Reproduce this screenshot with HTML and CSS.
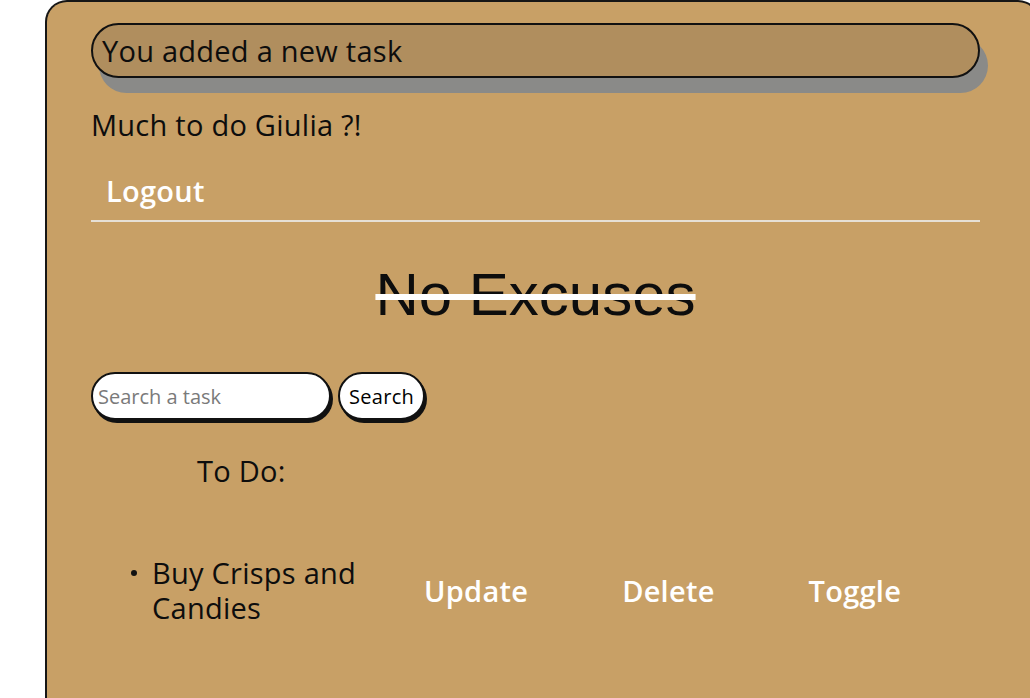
FILE: index.html
```html
<!DOCTYPE html>
<html>
<head>
<meta charset="utf-8">
<link rel="stylesheet" href="styles.css">
</head>
<body>
<div class="card">
  <div class="notice">You added a new task</div>
  <p class="greeting">Much to do Giulia ?!</p>
  <nav class="nav"><a class="logout" href="#">Logout</a></nav>
  <h1 class="title">No Excuses</h1>
  <form class="search">
    <input class="search-input" type="text" placeholder="Search a task">
    <button class="search-btn" type="button">Search</button>
  </form>
  <h2 class="todo-head">To Do:</h2>
  <ul class="tasks">
    <li class="task">
      <span class="task-name">Buy Crisps and Candies</span>
      <a class="action act-update" href="#">Update</a>
      <a class="action act-delete" href="#">Delete</a>
      <a class="action act-toggle" href="#">Toggle</a>
    </li>
  </ul>
</div>
</body>
</html>
```
FILE: styles.css
```css
html, body {
  margin: 0;
  padding: 0;
  background: #ffffff;
  overflow: hidden;
  height: 698px;
}
.card {
  box-sizing: border-box;
  margin-left: 45px;
  width: 995px;
  height: 720px;
  background: #c8a066;
  border: 2px solid #161616;
  border-bottom: none;
  border-radius: 22px 22px 0 0;
  padding: 21px 58px 0 44px;
  font-family: "Open Sans", sans-serif;
  color: #0d0d0d;
  letter-spacing: 0.25px;
}
.notice {
  box-sizing: border-box;
  height: 55px;
  background: #b08e5e;
  border: 2px solid #111;
  border-radius: 28px;
  box-shadow: 8px 15px 0 #8a8a88;
  padding: 0 9px;
  font-size: 29px;
  line-height: 51px;
}
.greeting {
  margin: 30px 0 0;
  font-size: 29px;
  line-height: 34px;
}
.nav {
  margin-top: 32px;
  border-bottom: 2px solid #e6e0d6;
  padding: 0 0 12px 15px;
  height: 34px;
}
.logout {
  color: #ffffff;
  text-decoration: none;
  font-weight: 600;
  font-size: 29px;
  line-height: 34px;
}
.title {
  margin: 40px 0 0;
  text-align: center;
  font-family: "Liberation Sans", Arial, sans-serif;
  font-weight: 400;
  letter-spacing: 0;
  font-size: 60px;
  line-height: 66px;
  text-decoration: line-through;
  text-decoration-color: #ffffff;
  text-decoration-thickness: 6px;
}
.search {
  margin-top: 44px;
  display: flex;
  gap: 7px;
  align-items: center;
}
.search-input {
  box-sizing: border-box;
  width: 240px;
  height: 48px;
  border: 2px solid #111;
  border-radius: 24px;
  background: #fff;
  box-shadow: 2px 3px 0 #111;
  padding: 0 5px;
  font-family: "Open Sans", sans-serif;
  font-size: 20px;
  outline: none;
}
.search-input::placeholder {
  color: #7a7a7a;
}
.search-btn {
  box-sizing: border-box;
  height: 48px;
  padding: 0 9px;
  border: 2px solid #111;
  border-radius: 24px;
  background: #fff;
  box-shadow: 2px 3px 0 #111;
  font-family: "Open Sans", sans-serif;
  font-size: 20px;
  font-weight: 500;
  letter-spacing: 0.3px;
  color: #000;
}
.todo-head {
  margin: 34px 0 0 106px;
  font-weight: 400;
  font-size: 29px;
  line-height: 34px;
}
.tasks {
  margin: 67px 0 0;
  padding: 0 0 0 40px;
}
.task {
  display: flex;
  align-items: center;
  font-size: 29px;
  line-height: 35px;
}
.task::before {
  content: "";
  width: 6px;
  height: 6px;
  border-radius: 50%;
  background: #111;
  margin: 0 15px 0 0;
  align-self: flex-start;
  margin-top: 15px;
}
.task-name {
  width: 220px;
}
.action {
  color: #fff;
  text-decoration: none;
  font-weight: 600;
  font-size: 29px;
}
.act-update { margin-left: 52px; }
.act-delete { margin-left: 94px; }
.act-toggle { margin-left: 94px; }
```
